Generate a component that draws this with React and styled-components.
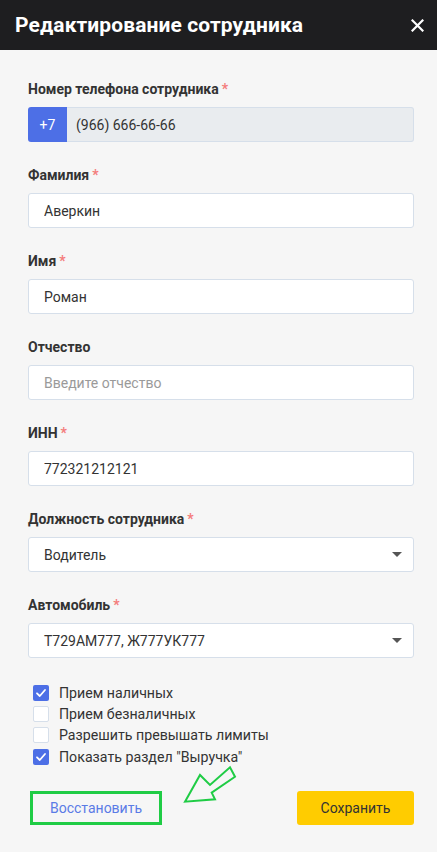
import React from 'react';
import styled, { createGlobalStyle } from 'styled-components';

const Global = createGlobalStyle`
  html, body { margin: 0; padding: 0; background: #f6f6f6; }
  body { font-family: Roboto, "Noto Sans", Arial, sans-serif; }
  * { box-sizing: border-box; }
`;

const Modal = styled.div`
  width: 437px;
  min-height: 852px;
  background: #f6f6f6;
  position: relative;
`;

const Header = styled.header`
  height: 50px;
  background: #1e1e20;
  display: flex;
  align-items: center;
  justify-content: space-between;
  padding: 0 13px 0 15px;
`;

const Title = styled.h1`
  margin: 0;
  color: #fff;
  font-size: 21px;
  font-weight: 700;
  letter-spacing: 0.1px;
`;

const CloseButton = styled.button`
  background: none;
  border: 0;
  padding: 0;
  width: 14px;
  height: 14px;
  display: flex;
  align-items: center;
  justify-content: center;
  cursor: pointer;
`;

const Body = styled.div`
  padding: 31px 23px 0 28px;
`;

const Field = styled.div`
  margin-bottom: 25px;
`;

const Label = styled.div`
  font-size: 14px;
  font-weight: 700;
  line-height: 16px;
  color: #333;
  margin-bottom: 10px;
`;

const Req = styled.span`
  color: #f47c7c;
  margin-left: 3px;
`;

const Input = styled.input`
  display: block;
  width: 100%;
  height: 35px;
  border: 1px solid #d6dfea;
  border-radius: 3px;
  background: ${p => (p.$disabled ? '#e9ecef' : '#fff')};
  padding: 0 15px;
  font-family: inherit;
  font-size: 14px;
  color: #333;
  outline: none;
  &::placeholder { color: #9a9a9a; }
`;

const PhoneGroup = styled.div`
  display: flex;
  height: 35px;
`;

const Prefix = styled.div`
  width: 39px;
  flex: none;
  background: #4d6fe6;
  color: #fff;
  font-size: 14px;
  display: flex;
  align-items: center;
  justify-content: center;
  border-radius: 3px 0 0 3px;
`;

const PhoneInput = styled(Input)`
  border-left: 0;
  border-radius: 0 3px 3px 0;
  padding-left: 9px;
  height: 35px;
`;

const Select = styled.div`
  height: 35px;
  border: 1px solid #d6dfea;
  border-radius: 3px;
  background: #fff;
  padding: 0 11px 0 15px;
  display: flex;
  align-items: center;
  justify-content: space-between;
  font-size: 14px;
  color: #333;
`;

const Caret = styled.span`
  width: 0;
  height: 0;
  border-left: 5px solid transparent;
  border-right: 5px solid transparent;
  border-top: 5px solid #555;
`;

const Checks = styled.div`
  display: flex;
  flex-direction: column;
  padding-left: 5px;
  margin-top: -1px;
`;

const CheckRow = styled.label`
  display: flex;
  align-items: center;
  height: 21.33px;
  gap: 10px;
  font-size: 14.2px;
  color: #333;
`;

const Box = styled.span`
  width: 16px;
  height: 16px;
  border-radius: 2px;
  flex: none;
  display: flex;
  align-items: center;
  justify-content: center;
  background: ${p => (p.$checked ? '#4d6fe6' : '#fff')};
  border: ${p => (p.$checked ? '0' : '1.5px solid #d6dfea')};
`;

const Footer = styled.div`
  display: flex;
  justify-content: space-between;
  align-items: center;
  margin-top: 24px;
  padding-left: 2px;
`;

const RestoreButton = styled.button`
  width: 132px;
  height: 34px;
  border: 3px solid #1fcc45;
  background: transparent;
  color: #5a7be6;
  font-family: inherit;
  font-size: 14px;
  cursor: pointer;
`;

const SaveButton = styled.button`
  width: 117px;
  height: 34px;
  border: 0;
  border-radius: 3px;
  background: #ffcc00;
  color: #333;
  font-family: inherit;
  font-size: 14px;
  cursor: pointer;
`;

const Arrow = styled.svg`
  position: absolute;
  left: 170px;
  top: 760px;
  pointer-events: none;
`;

const Check = ({ checked, children }) => (
  <CheckRow>
    <Box $checked={checked}>
      {checked && (
        <svg width="12" height="12" viewBox="0 0 12 12">
          <path d="M2 6.3 L4.8 9 L10 3" fill="none" stroke="#fff" strokeWidth="1.8" strokeLinecap="round" strokeLinejoin="round" />
        </svg>
      )}
    </Box>
    {children}
  </CheckRow>
);

export default function App() {
  return (
    <Modal>
      <Global />
      <Header>
        <Title>Редактирование сотрудника</Title>
        <CloseButton aria-label="close">
          <svg width="13" height="13" viewBox="0 0 13 13">
            <path d="M1.5 1.5 L11.5 11.5 M11.5 1.5 L1.5 11.5" stroke="#fff" strokeWidth="2.2" strokeLinecap="square" />
          </svg>
        </CloseButton>
      </Header>
      <Body>
        <Field>
          <Label>Номер телефона сотрудника<Req>*</Req></Label>
          <PhoneGroup>
            <Prefix>+7</Prefix>
            <PhoneInput $disabled readOnly value="(966) 666-66-66" />
          </PhoneGroup>
        </Field>
        <Field>
          <Label>Фамилия<Req>*</Req></Label>
          <Input readOnly value="Аверкин" />
        </Field>
        <Field>
          <Label>Имя<Req>*</Req></Label>
          <Input readOnly value="Роман" />
        </Field>
        <Field>
          <Label>Отчество</Label>
          <Input placeholder="Введите отчество" />
        </Field>
        <Field>
          <Label>ИНН<Req>*</Req></Label>
          <Input readOnly value="772321212121" />
        </Field>
        <Field>
          <Label>Должность сотрудника<Req>*</Req></Label>
          <Select>Водитель<Caret /></Select>
        </Field>
        <Field>
          <Label>Автомобиль<Req>*</Req></Label>
          <Select>Т729АМ777, Ж777УК777<Caret /></Select>
        </Field>
        <Checks>
          <Check checked>Прием наличных</Check>
          <Check>Прием безналичных</Check>
          <Check>Разрешить превышать лимиты</Check>
          <Check checked>Показать раздел "Выручка"</Check>
        </Checks>
        <Footer>
          <RestoreButton>Восстановить</RestoreButton>
          <SaveButton>Сохранить</SaveButton>
        </Footer>
      </Body>
      <Arrow width="80" height="50" viewBox="0 0 80 50">
        <polygon
          points="15,41.7 30,15 40,25 60,7.3 65,16.7 41.7,32.7 45,39.3"
          fill="none"
          stroke="#1fcc45"
          strokeWidth="2"
          strokeLinejoin="miter"
        />
      </Arrow>
    </Modal>
  );
}
